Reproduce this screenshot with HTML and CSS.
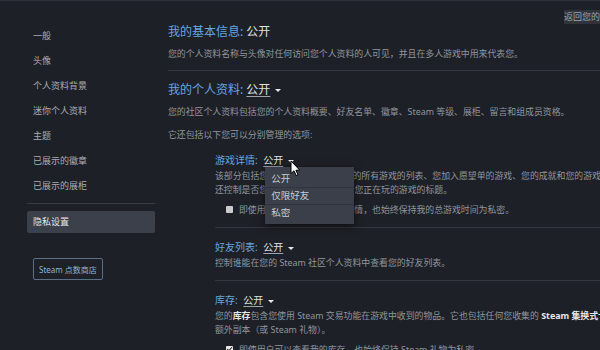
FILE: index.html
```html
<!DOCTYPE html>
<html lang="zh-CN">
<head>
    <meta charset="UTF-8">
    <meta name="viewport" content="width=device-width, initial-scale=1.0">
    <title>隐私设置</title>
    <link rel="stylesheet" href="styles.css">
</head>
<body>
    <div class="sidebar">
        <ul class="nav">
            <li>一般</li>
            <li>头像</li>
            <li>个人资料背景</li>
            <li>迷你个人资料</li>
            <li>主题</li>
            <li>已展示的徽章</li>
            <li>已展示的展柜</li>
        </ul>
        <div class="nav-active">隐私设置</div>
        <button class="points-btn">Steam 点数商店</button>
    </div>

    <div class="main">
        <div class="topbar"><a class="back-link">返回您的个人资料</a></div>

        <div class="block">
            <h2 class="title"><span class="label">我的基本信息:</span> <span class="value">公开</span></h2>
            <p class="desc">您的个人资料名称与头像对任何访问您个人资料的人可见，并且在多人游戏中用来代表您。</p>
        </div>

        <div class="block block-open">
            <h2 class="title"><span class="label">我的个人资料:</span> <span class="value link">公开</span><span class="caret"></span></h2>
            <p class="desc">您的社区个人资料包括您的个人资料概要、好友名单、徽章、Steam 等级、展柜、留言和组成员资格。</p>
            <p class="desc desc-gap">它还包括以下您可以分别管理的选项:</p>

            <div class="sub">
                <h3 class="sub-title">
                    <span class="label">游戏详情:</span>
                    <span class="picker">
                        <span class="value link">公开</span><span class="caret"></span>
                        <span class="menu">
                            <span class="menu-item">公开</span>
                            <span class="menu-item">仅限好友</span>
                            <span class="menu-item">私密</span>
                        </span>
                        <svg class="cursor" width="11" height="17" viewBox="0 0 11 17">
                            <path d="M1 1 L1 13.5 L4 10.8 L6.2 15.6 L8 14.8 L5.9 10.2 L9.8 10.2 Z" fill="#fff" stroke="#000" stroke-width="1"/>
                        </svg>
                    </span>
                </h3>
                <p class="desc lines">该部分包括您在 Steam 帐户上拥有的所有游戏的列表、您加入愿望单的游戏、您的成就和您的游戏时间。它<br>还控制是否您被视为“在游戏中”以及您正在玩的游戏的标题。</p>
                <label class="check"><span class="box"></span>即使用户可以查看我的游戏详情，也始终保持我的总游戏时间为私密。</label>
            </div>

            <div class="sub">
                <h3 class="sub-title"><span class="label">好友列表:</span> <span class="value link">公开</span><span class="caret"></span></h3>
                <p class="desc">控制谁能在您的 Steam 社区个人资料中查看您的好友列表。</p>
            </div>

            <div class="sub sub-last">
                <h3 class="sub-title"><span class="label">库存:</span> <span class="value link">公开</span><span class="caret"></span></h3>
                <p class="desc lines">您的<b>库存</b>包含您使用 Steam 交易功能在游戏中收到的物品。它也包括任何您收集的 <b>Steam 集换式卡牌</b><br>额外副本（或 Steam 礼物）。</p>
                <label class="check"><span class="box box-on"></span>即使用户可以查看我的库存，也始终保持 Steam 礼物为私密。</label>
            </div>
        </div>
    </div>
</body>
</html>
```

FILE: styles.css
```css
body {
    font-family: "Noto Sans", "Noto Sans CJK SC", sans-serif;
    background-color: #1e2027;
    border-top: 1px solid #2d3038;
    margin: 0;
    padding: 0;
    display: flex;
    height: 349px;
    overflow: hidden;
}
.sidebar {
    width: 128px;
    flex-shrink: 0;
    padding: 22px 13px 0 27px;
}
.nav {
    list-style-type: none;
    margin: 0;
    padding: 0 0 5px;
    border-bottom: 1px solid #383b42;
}
.nav li {
    font-size: 9px;
    line-height: 25px;
    color: #a9adb3;
    padding-left: 6px;
}
.nav-active {
    margin-top: 7px;
    height: 22px;
    line-height: 22px;
    padding-left: 6px;
    font-size: 9px;
    color: #e4e6e8;
    background-color: #3b404b;
    border-radius: 2px;
}
.points-btn {
    margin: 25px 0 0 6px;
    height: 22px;
    padding: 0 5px;
    font-family: inherit;
    font-size: 8px;
    color: #8fb3dc;
    background: transparent;
    border: 1px solid #5b6f87;
    border-radius: 2px;
}
.main {
    width: 468px;
    flex-shrink: 0;
    white-space: nowrap;
}
.topbar {
    display: flex;
    justify-content: flex-end;
    height: 23px;
    padding-top: 9px;
    box-sizing: border-box;
}
.back-link {
    font-size: 9px;
    line-height: 14px;
    color: #9ba0a8;
    background-color: #30333b;
}
.block {
    border-bottom: 1px solid #33363e;
    padding-bottom: 10px;
}
.block-open {
    border-bottom: none;
    padding-top: 11px;
}
.title {
    margin: 0;
    font-size: 12px;
    font-weight: normal;
    line-height: 16px;
}
.label {
    color: #63a7e0;
}
.value {
    color: #dfe1e3;
}
.link {
    text-decoration: underline;
    text-underline-offset: 2px;
    text-decoration-color: #9ea3a9;
}
.caret {
    display: inline-block;
    margin-left: 5px;
    vertical-align: middle;
    border-left: 3px solid transparent;
    border-right: 3px solid transparent;
    border-top: 3px solid #e6e8ea;
}
.desc {
    margin: 7px 0 0;
    font-size: 8.9px;
    line-height: 13px;
    color: #8f969e;
}
.desc b {
    color: #e6e8ea;
    font-weight: bold;
}
.desc-gap {
    margin-top: 10px;
}
.sub {
    margin-left: 47px;
    padding: 12px 0 11px;
    border-bottom: 1px solid #33363e;
}
.sub-last {
    border-bottom: none;
}
.sub-title {
    margin: 0;
    font-size: 10px;
    font-weight: normal;
    line-height: 14px;
}
.sub-title .value {
    margin-left: 3px;
}
.sub .desc {
    margin-top: 2px;
}
.sub .lines {
    line-height: 13.5px;
}
.check {
    display: flex;
    align-items: center;
    margin: 7px 0 0 11px;
    font-size: 8.9px;
    line-height: 13px;
    color: #8f969e;
}
.box {
    width: 7px;
    height: 7px;
    margin-right: 6px;
    background-color: #c9cbce;
    border-radius: 1px;
}
.box-on {
    background-color: #e8e8e8;
    position: relative;
}
.box-on::after {
    content: "";
    position: absolute;
    left: 2px;
    top: 0;
    width: 2px;
    height: 4px;
    border-right: 1px solid #222;
    border-bottom: 1px solid #222;
    transform: rotate(40deg);
}
.picker {
    position: relative;
}
.menu {
    position: absolute;
    left: 5px;
    top: 14px;
    width: 89px;
    padding: 4px 0 3px;
    background-color: #3a3f49;
    box-shadow: 0 2px 8px rgba(0, 0, 0, 0.6);
    z-index: 2;
}
.menu-item {
    display: block;
    padding-left: 6px;
    font-size: 9.5px;
    line-height: 16px;
    color: #c8ccd2;
    border-top: 1px solid #30343c;
}
.menu-item:first-child {
    border-top: none;
}
.cursor {
    position: absolute;
    left: 30px;
    top: 7px;
    z-index: 3;
}
```
